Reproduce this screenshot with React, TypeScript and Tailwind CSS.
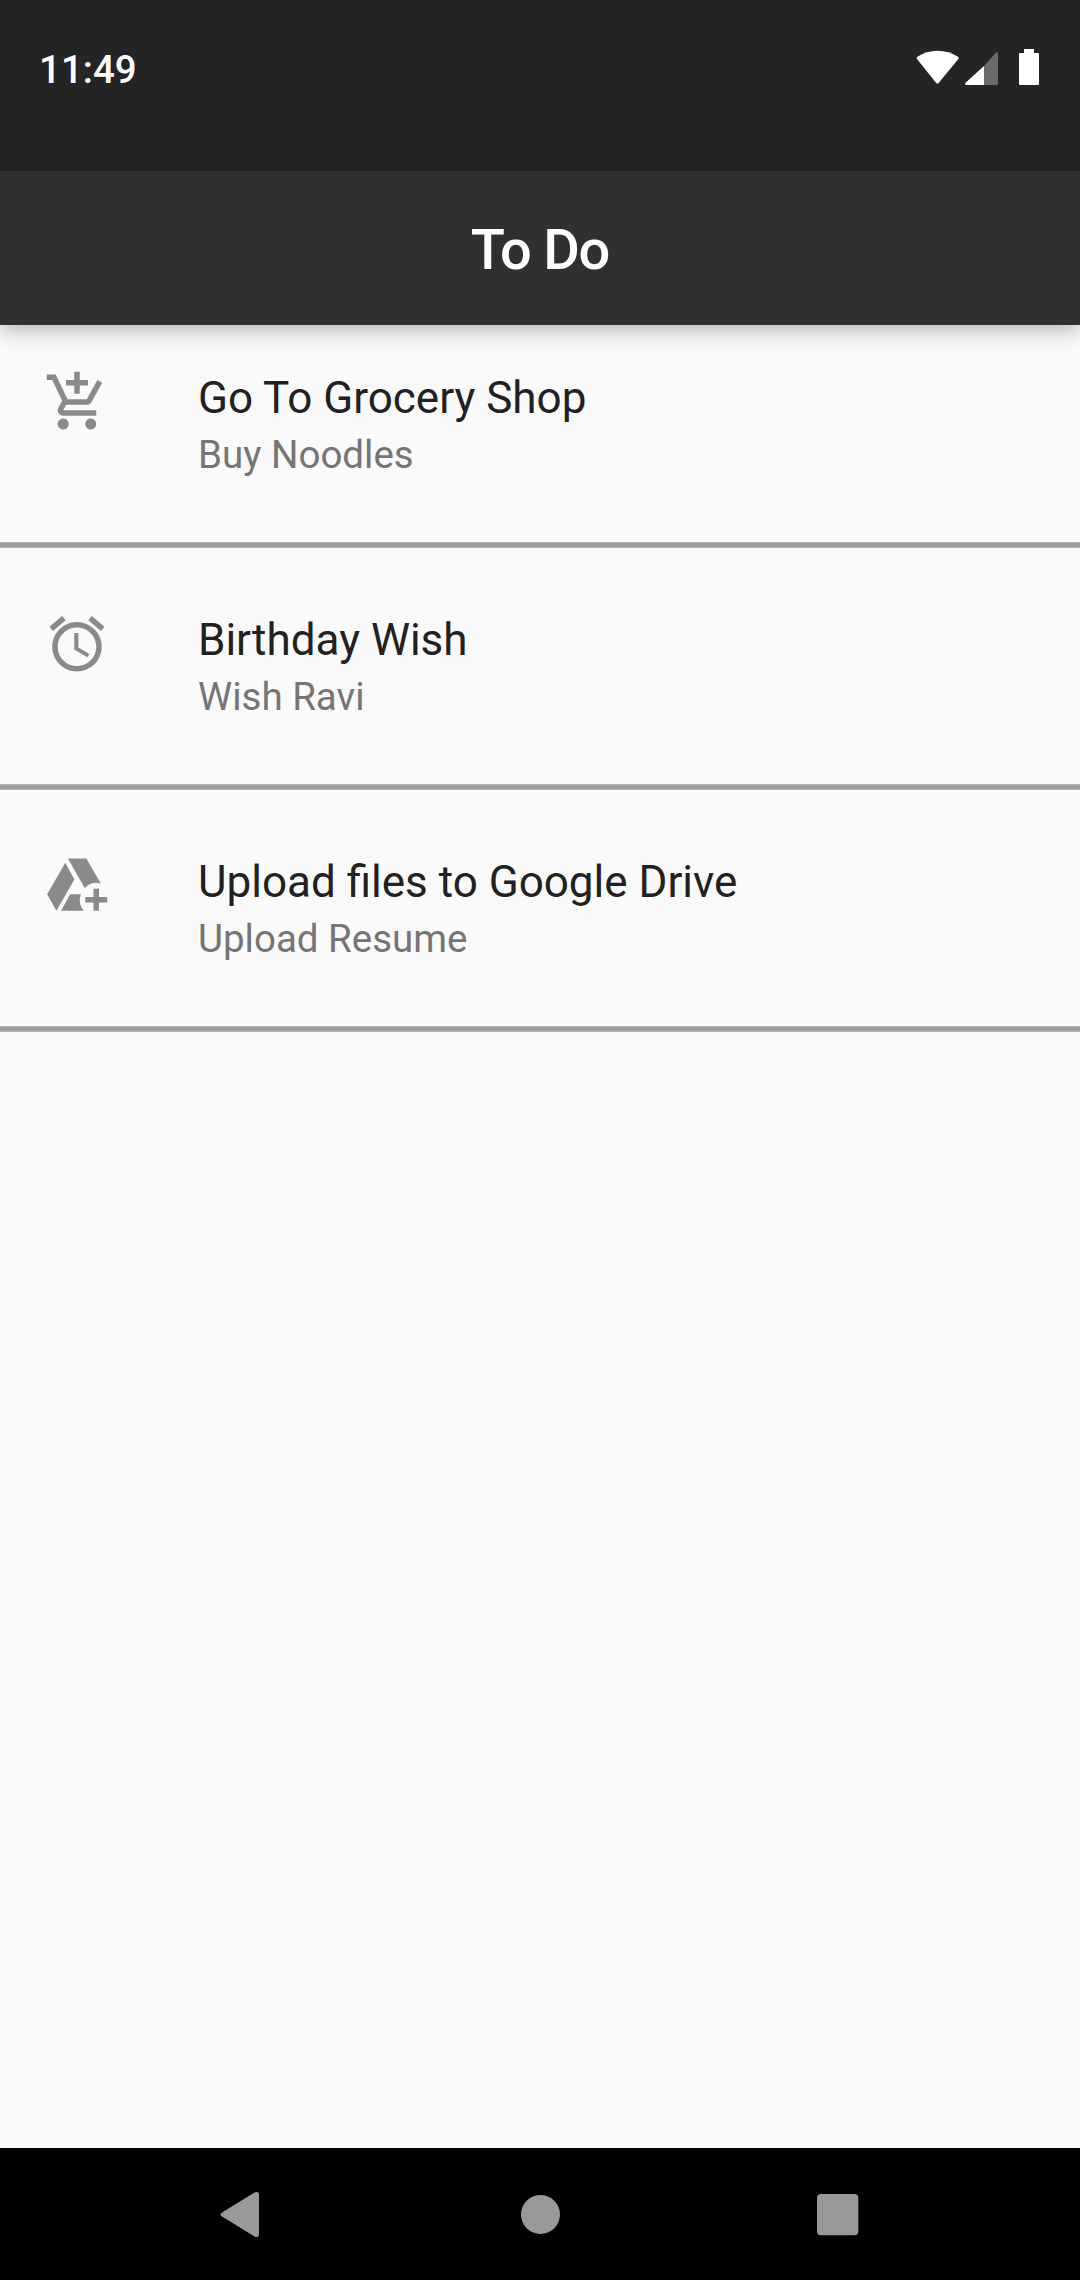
import { MdOutlineAddShoppingCart, MdAlarm } from "react-icons/md";

function AddToDriveIcon({ size, color }: { size: number; color: string }) {
  return (
    <svg width={size} height={size} viewBox="0 0 24 24" fill={color}>
      <path d="M8.7 2H15.4L20.65 11.05A6.1 6.1 0 0 0 14.8 12.7Z" />
      <path d="M7.75 3.5L11.05 9.6L4.5 21L1.15 15Z" />
      <path d="M9.5 15H13.4A6.1 6.1 0 0 0 14.45 21H6.2Z" />
      <path d="M20 16V13H18V16H15V18H18V21H20V18H23V16Z" />
    </svg>
  );
}

const items = [
  { title: "Go To Grocery Shop", note: "Buy Noodles", Icon: MdOutlineAddShoppingCart },
  { title: "Birthday Wish", note: "Wish Ravi", Icon: MdAlarm },
  { title: "Upload files to Google Drive", note: "Upload Resume", Icon: AddToDriveIcon },
];

function StatusBar() {
  return (
    <div className="relative z-10 flex h-[171px] items-start justify-between bg-[#242424] pt-[47px] pr-[41px] pl-[39px] text-white">
      <span className="text-[38.5px] leading-[46px] font-medium">11:49</span>
      <div className="mt-[2px] flex items-center">
        <svg width="44" height="36" viewBox="0 0 44 36" fill="#fff">
          <path d="M20.2 34 L1 10 Q.2 8.7 1.4 7.7 C13 -.3 30 -.3 42 7.7 Q43.2 8.7 42.4 10 L22.6 34 Q21.4 35.2 20.2 34 Z" />
        </svg>
        <svg className="ml-[4px]" width="36" height="36" viewBox="0 0 36 36">
          <path d="M20 17 L31.5 4 Q34 2.200 34 5 V34.500 Q34 36 32.500 36 H20 Z" fill="#6a6a6a" />
          <path d="M20 17 V36 H2 Q.3 35.500 1.500 33.700 Z" fill="#fff" />
        </svg>
        <svg className="ml-[19px]" width="20" height="36" viewBox="0 0 20 36" fill="#fff">
          <path d="M5 0 H15 V4 H19 Q20 4 20 5 V35 Q20 36 19 36 H1 Q0 36 0 35 V5 Q0 4 1 4 H5 Z" />
        </svg>
      </div>
    </div>
  );
}

export default function App() {
  return (
    <div className="flex h-[2280px] w-[1080px] flex-col bg-[#fafafa] font-[Roboto,sans-serif]">
      <StatusBar />
      <header className="relative flex h-[154px] items-center justify-center bg-[#303030] pt-[4px] shadow-[0_6px_20px_rgba(0,0,0,0.26)]">
        <h1 className="text-[56px] font-medium tracking-[-1.2px] text-white">To Do</h1>
      </header>
      <main className="flex-1">
        {items.map(({ title, note, Icon }) => (
          <div key={title} className="h-[242px]">
            <div className="flex h-[217px] pt-[44px] pl-[44px]">
              <Icon size={66} color="#8a8a8a" />
              <div className="ml-[88px]">
                <div className="text-[44px] leading-[58px] text-[#212121]">{title}</div>
                <div className="text-[38.5px] leading-[56px] text-[#757575]">{note}</div>
              </div>
            </div>
            <div className="h-[6px] border-y border-[#b4b4b4] bg-[#9e9e9e]" />
          </div>
        ))}
      </main>
      <nav className="flex h-[132px] items-center justify-center bg-black">
        <svg width="640" height="60" viewBox="0 0 640 60" fill="#999">
          <path d="M2 28.500 L34.500 8.600 Q39 6.700 39 11 V50 Q39 54.300 34.500 52.400 L2 32.500 Q-1 30.500 2 28.500 Z" />
          <circle cx="320.500" cy="30.500" r="19.500" />
          <rect x="597" y="10" width="41.300" height="41.300" rx="4" />
        </svg>
      </nav>
    </div>
  );
}
